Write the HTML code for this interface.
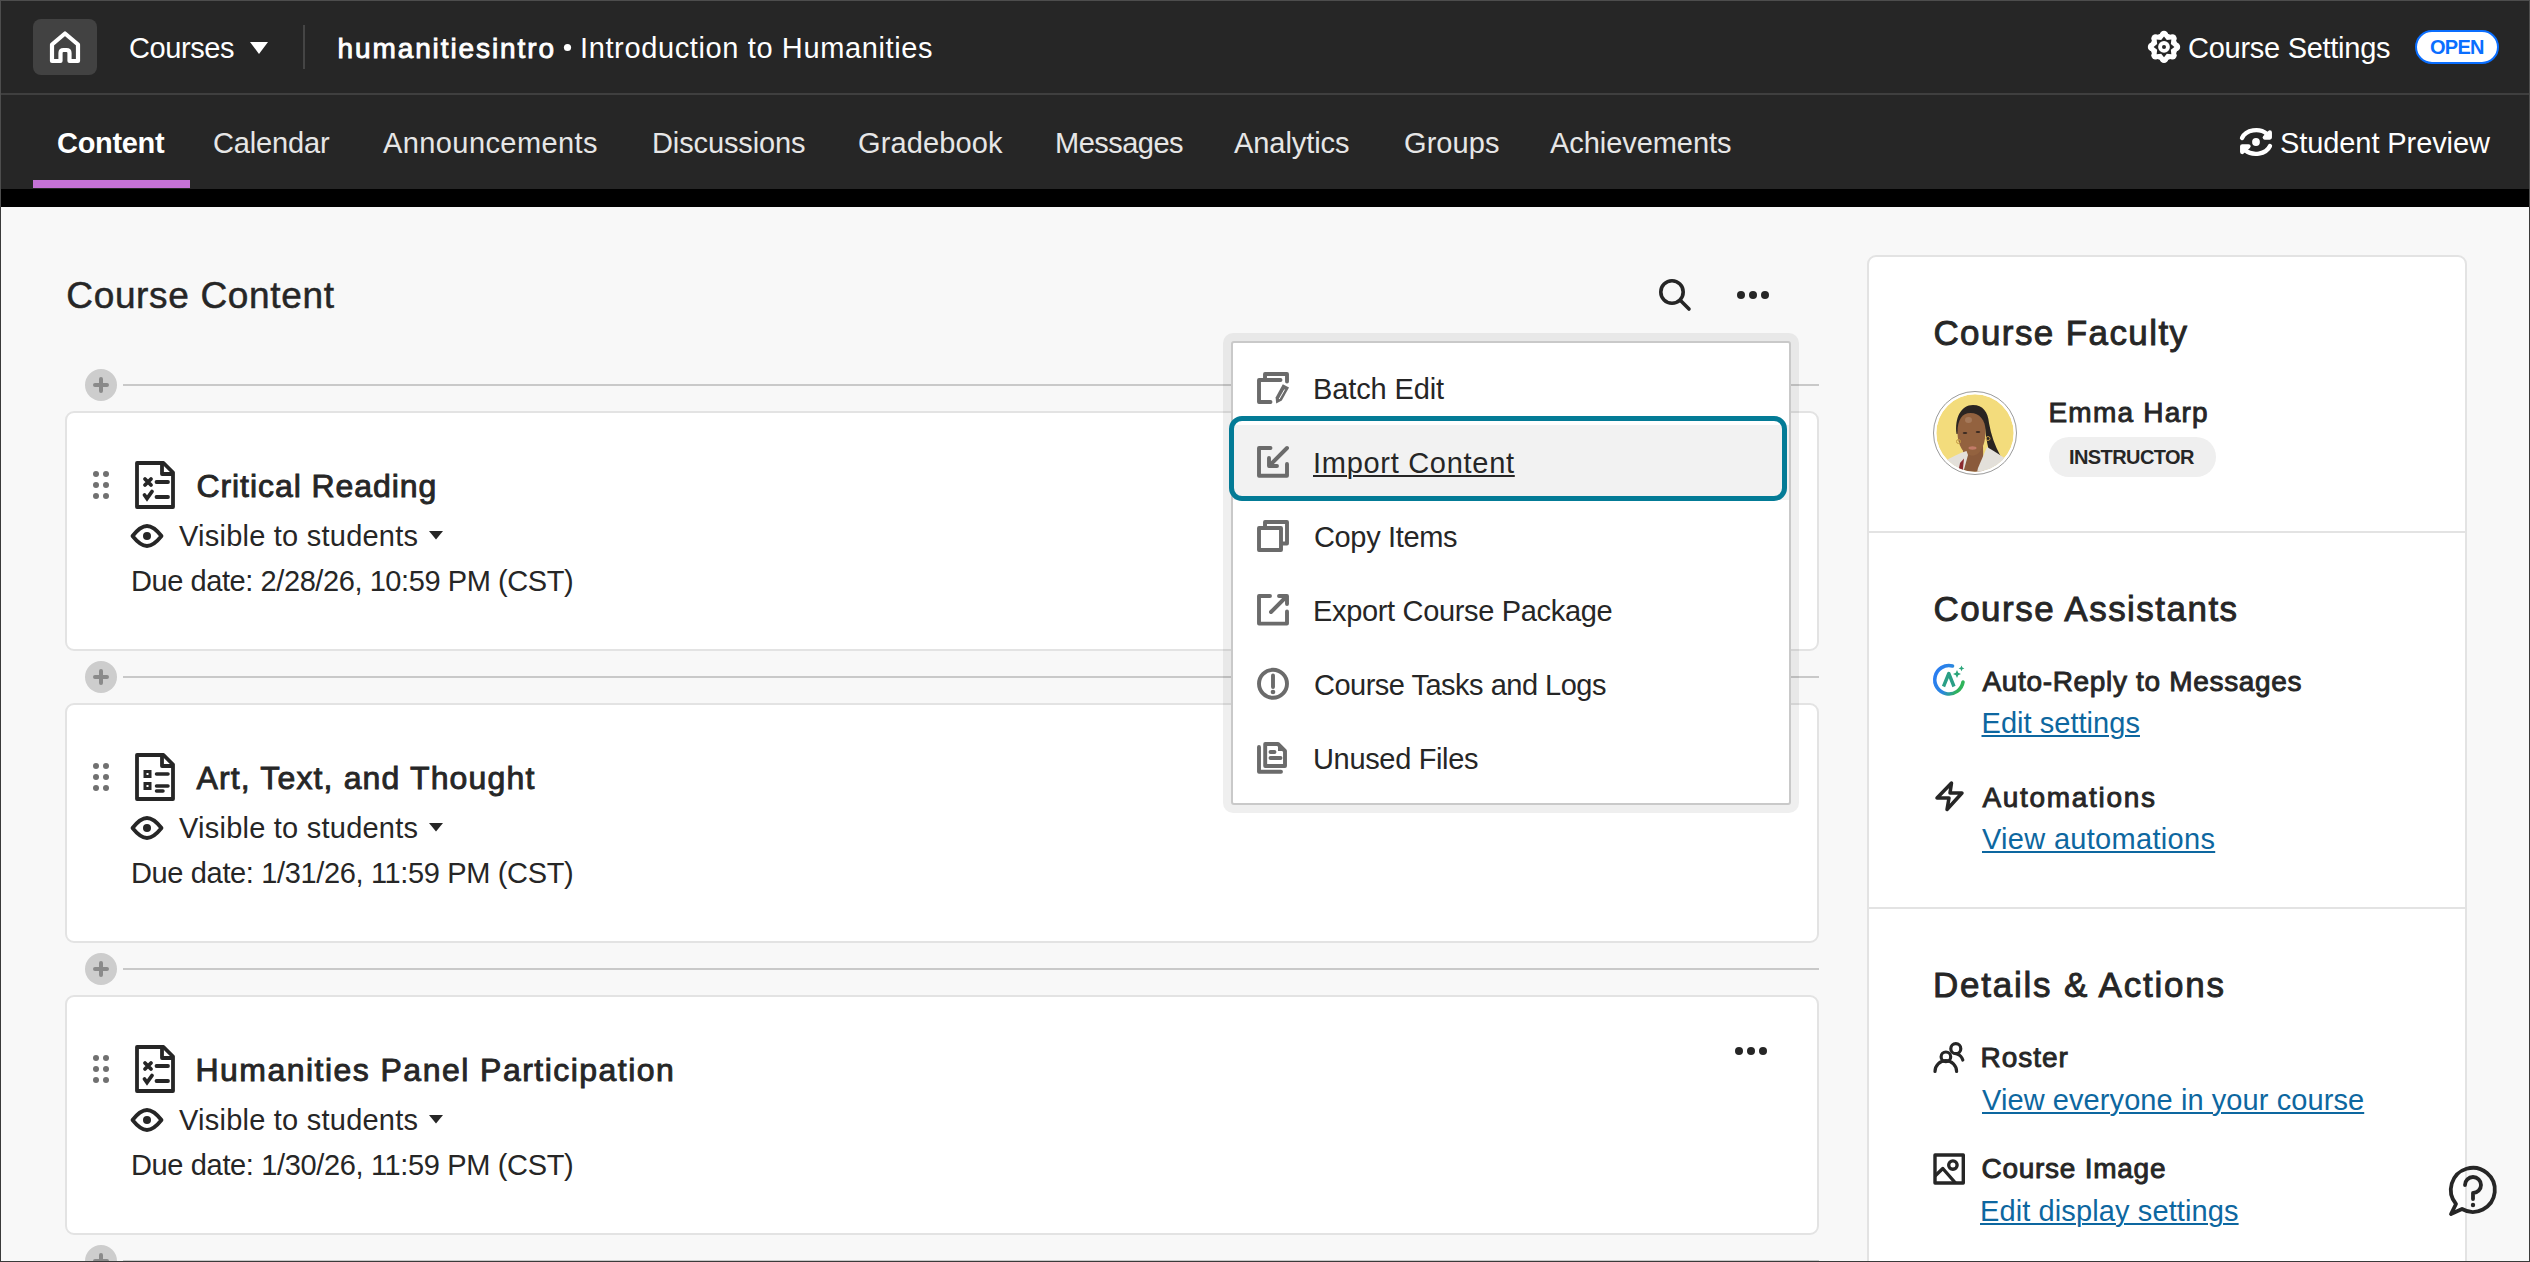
<!DOCTYPE html>
<html><head><meta charset="utf-8"><title>Course Content</title>
<style>
html,body{margin:0;padding:0}
body{width:2530px;height:1262px;position:relative;overflow:hidden;background:#f8f8f8;font-family:"Liberation Sans",sans-serif}
.a{position:absolute}
.t{position:absolute;white-space:nowrap;font-family:"Liberation Sans",sans-serif}
svg.full{position:absolute;left:0;top:0;width:2530px;height:1262px;overflow:visible}
</style></head><body>
<!-- top bars -->
<div class="a" style="left:0;top:0;width:2530px;height:189px;background:#262626"></div>
<div class="a" style="left:0;top:93px;width:2530px;height:2px;background:#3f3f3f"></div>
<div class="a" style="left:33px;top:19px;width:64px;height:56px;border-radius:8px;background:#424242"></div>
<div class="a" style="left:303px;top:25px;width:2px;height:44px;background:#454545"></div>
<div class="a" style="left:2415px;top:30px;width:80px;height:30px;border:2px solid #0a6eff;border-radius:17px;background:#fff"></div>
<div class="a" style="left:33px;top:180px;width:157px;height:8px;background:#c572d6"></div>
<div class="a" style="left:0;top:189px;width:2530px;height:18px;background:#000"></div>

<!-- add rows -->
<div class="a" style="left:123px;top:384px;width:1696px;height:2px;background:#c9c9c9"></div>
<div class="a" style="left:123px;top:676px;width:1696px;height:2px;background:#c9c9c9"></div>
<div class="a" style="left:123px;top:968px;width:1696px;height:2px;background:#c9c9c9"></div>
<div class="a" style="left:123px;top:1260px;width:1696px;height:2px;background:#c9c9c9"></div>

<!-- cards -->
<div class="a" style="left:65px;top:411px;width:1750px;height:236px;border:2px solid #e3e3e3;border-radius:9px;background:#fff"></div>
<div class="a" style="left:65px;top:703px;width:1750px;height:236px;border:2px solid #e3e3e3;border-radius:9px;background:#fff"></div>
<div class="a" style="left:65px;top:995px;width:1750px;height:236px;border:2px solid #e3e3e3;border-radius:9px;background:#fff"></div>

<!-- sidebar -->
<div class="a" style="left:1867px;top:255px;width:596px;height:1100px;border:2px solid #e3e3e3;border-radius:9px;background:#fff"></div>
<div class="a" style="left:1869px;top:531px;width:596px;height:2px;background:#e3e3e3"></div>
<div class="a" style="left:1869px;top:907px;width:596px;height:2px;background:#e3e3e3"></div>
<div class="a" style="left:2049px;top:437px;width:167px;height:40px;border-radius:20px;background:#efefef"></div>

<svg class="full" viewBox="0 0 2530 1262">
 <!-- house -->
 <path d="M60.5,61 H52 V44.5 L65,33.5 L78,44.5 V61 H69.5 V53 Q69.5,50 66.5,50 H63.5 Q60.5,50 60.5,53 Z" fill="none" stroke="#fff" stroke-width="4.2" stroke-linejoin="round"/>
 <!-- courses caret -->
 <polygon points="250,42 268,42 259,54" fill="#fff"/>
 <!-- bullet -->
 <circle cx="567.5" cy="47.5" r="3.6" fill="#fff"/>
 <!-- gear -->
 <g transform="translate(2164,46.9)" fill="#fff">
  <circle r="13.6"/>
  <circle cx="0.00" cy="-11.90" r="4.3"/><circle cx="8.41" cy="-8.41" r="4.3"/><circle cx="11.90" cy="-0.00" r="4.3"/><circle cx="8.41" cy="8.41" r="4.3"/><circle cx="0.00" cy="11.90" r="4.3"/><circle cx="-8.41" cy="8.41" r="4.3"/><circle cx="-11.90" cy="0.00" r="4.3"/><circle cx="-8.41" cy="-8.41" r="4.3"/>
  <polygon fill="#262626" points="0.00,-10.40 2.83,-6.84 7.35,-7.35 6.84,-2.83 10.40,-0.00 6.84,2.83 7.35,7.35 2.83,6.84 0.00,10.40 -2.83,6.84 -7.35,7.35 -6.84,2.83 -10.40,0.00 -6.84,-2.83 -7.35,-7.35 -2.83,-6.84"/>
  <circle r="5.9"/>
  <circle r="2" fill="#262626"/>
 </g>
 <!-- student preview -->
 <g fill="none" stroke="#fff" stroke-width="4.3" stroke-linecap="round" stroke-linejoin="round">
  <path d="M2242,138 A15,12 0 0 1 2267,134"/>
  <path d="M2264.8,137.5 H2269.8 V132.5 Z" fill="#fff"/>
  <path d="M2270,146 A15,12 0 0 1 2245,150"/>
  <path d="M2248.5,146.3 H2242.2 V152 Z" fill="#fff"/>
 </g>
 <circle cx="2256" cy="142" r="3.9" fill="#fff"/>

 <!-- search / more -->
 <circle cx="1672" cy="292" r="11.2" fill="none" stroke="#262626" stroke-width="3.6"/>
 <path d="M1681,301 L1689,309" stroke="#262626" stroke-width="3.6" stroke-linecap="round"/>
 <circle cx="1741" cy="295" r="4" fill="#262626"/><circle cx="1753" cy="295" r="4" fill="#262626"/><circle cx="1765" cy="295" r="4" fill="#262626"/>

 <!-- plus circles -->
 <g>
  <circle cx="101" cy="385" r="16" fill="#cdcdcd"/><path d="M95,385 H107 M101,379 V391" stroke="#8a8a8a" stroke-width="4" stroke-linecap="round"/>
  <circle cx="101" cy="677" r="16" fill="#cdcdcd"/><path d="M95,677 H107 M101,671 V683" stroke="#8a8a8a" stroke-width="4" stroke-linecap="round"/>
  <circle cx="101" cy="969" r="16" fill="#cdcdcd"/><path d="M95,969 H107 M101,963 V975" stroke="#8a8a8a" stroke-width="4" stroke-linecap="round"/>
  <circle cx="101" cy="1261" r="16" fill="#cdcdcd"/><path d="M95,1261 H107 M101,1255 V1267" stroke="#8a8a8a" stroke-width="4" stroke-linecap="round"/>
 </g>

 <!-- card icons -->
 <defs>
  <g id="drag" fill="#707070">
   <circle cx="96" cy="474" r="3"/><circle cx="106" cy="474" r="3"/>
   <circle cx="96" cy="485" r="3"/><circle cx="106" cy="485" r="3"/>
   <circle cx="96" cy="496" r="3"/><circle cx="106" cy="496" r="3"/>
  </g>
  <g id="docframe" fill="none" stroke="#262626" stroke-width="3.8" stroke-linejoin="round">
   <path d="M137,463 H163.5 L173,472.5 V507 H137 Z"/>
   <path d="M162,463 V474 H173"/>
  </g>
  <g id="eye">
   <path d="M132.5,536 C138.5,528.5 142.5,526 147,526 C151.5,526 155.5,528.5 161.5,536 C155.5,543.5 151.5,546 147,546 C142.5,546 138.5,543.5 132.5,536 Z" fill="none" stroke="#262626" stroke-width="3.8" stroke-linejoin="round"/>
   <circle cx="147" cy="536" r="4" fill="#262626"/>
   <polygon points="429,531 443,531 436,539.5" fill="#262626"/>
  </g>
 </defs>
 <use href="#drag"/><use href="#docframe"/><use href="#eye"/>
 <g stroke="#262626" stroke-width="3.8" stroke-linecap="round" fill="none">
  <path d="M145,479 L151,485 M151,479 L145,485"/>
  <path d="M156.5,482 H168"/>
  <path d="M144.5,495 L147,498.5 L152,491.5"/>
  <path d="M156.5,497 H168"/>
 </g>
 <!-- card 2 -->
 <g transform="translate(0,292)">
  <use href="#drag"/><use href="#docframe"/><use href="#eye"/>
  <g fill="none" stroke="#262626" stroke-width="3" >
   <rect x="145" y="479.5" width="5" height="5"/>
   <rect x="145" y="491.5" width="5" height="5"/>
  </g>
  <g stroke="#262626" stroke-width="3.5" stroke-linecap="round">
   <path d="M156.5,482 H168 M156.5,494 H168 M156.5,499 H163"/>
  </g>
 </g>
 <!-- card 3 -->
 <g transform="translate(0,584)">
  <use href="#drag"/><use href="#docframe"/><use href="#eye"/>
  <g stroke="#262626" stroke-width="3.8" stroke-linecap="round" fill="none">
   <path d="M145,479 L151,485 M151,479 L145,485"/>
   <path d="M156.5,482 H168"/>
   <path d="M144.5,495 L147,498.5 L152,491.5"/>
   <path d="M156.5,497 H168"/>
  </g>
 </g>
 <circle cx="1739" cy="1051" r="4" fill="#262626"/><circle cx="1751" cy="1051" r="4" fill="#262626"/><circle cx="1763" cy="1051" r="4" fill="#262626"/>

 <!-- sidebar icons -->
 <defs>
  <linearGradient id="aig" x1="0" y1="0" x2="1" y2="0.4">
   <stop offset="0" stop-color="#2a7cf6"/><stop offset="0.55" stop-color="#2a86e0"/><stop offset="1" stop-color="#2fb45a"/>
  </linearGradient>
 </defs>
 <path d="M1952.5,666 A14.2,14.2 0 1 0 1963,682" fill="none" stroke="url(#aig)" stroke-width="3.6" stroke-linecap="round"/>
 <path d="M1943.5,686.5 L1948.8,673.5 L1954,686.5" fill="none" stroke="#2a9f86" stroke-width="3.4" stroke-linejoin="round"/>
 <path d="M1957,670 l1.2,2.8 2.8,1.2 -2.8,1.2 -1.2,2.8 -1.2,-2.8 -2.8,-1.2 2.8,-1.2 z" fill="#2aa57a"/>
 <path d="M1961.5,665.5 l0.9,2 2,0.9 -2,0.9 -0.9,2 -0.9,-2 -2,-0.9 2,-0.9 z" fill="#2aa57a"/>
 <path d="M1951.5,783 L1937,798 H1949 L1947,809.5 L1962,793 H1950 Z" fill="none" stroke="#262626" stroke-width="3.5" stroke-linejoin="round"/>
 <!-- roster -->
 <g fill="none" stroke="#262626" stroke-width="3.2" stroke-linecap="round">
  <circle cx="1945.9" cy="1056.8" r="4.8"/>
  <circle cx="1955.8" cy="1048.7" r="5"/>
  <path d="M1935,1071.5 A10.8,10.8 0 0 1 1956.6,1071.5"/>
  <path d="M1957,1054 A9,9 0 0 1 1962.8,1060"/>
 </g>
 <!-- course image -->
 <g fill="none" stroke="#262626" stroke-width="3.4" stroke-linejoin="round">
  <rect x="1935" y="1155" width="28.3" height="28"/>
  <path d="M1935,1176 L1942.8,1168.5 L1955.5,1183"/>
  <circle cx="1952.9" cy="1165.1" r="4.2"/>
 </g>
 <!-- help -->
 <g fill="none" stroke="#262626" stroke-width="3.8" stroke-linecap="round" stroke-linejoin="round">
  <path d="M2456,1204 L2451,1214 L2462,1209 A22,22 0 1 0 2456,1204 Z"/>
  <path d="M2465,1185 A8,8 0 1 1 2473,1193 V1199"/>
 </g>
 <circle cx="2473" cy="1205" r="2.2" fill="#262626"/>

 <!-- avatar -->
 <circle cx="1975" cy="433" r="41.5" fill="#fff" stroke="#9a9a9a" stroke-width="1"/>
 <clipPath id="avc"><circle cx="1975" cy="433" r="38.7"/></clipPath>
 <g clip-path="url(#avc)">
  <circle cx="1975" cy="433" r="38.7" fill="#f3dc7c"/>
  <path d="M1956.5,434 C1954.5,418 1961,405 1973,405 C1983,405 1988,412 1989,423 C1991,435 1995,446 2000.5,456 L1991,459 C1988,448 1986,438 1985,428 Z" fill="#2a2421"/>
  <path d="M1963.5,447 L1983,445 L1983.5,477 L1961,477 Z" fill="#8a5a3b"/>
  <path d="M1957.5,432 C1957.5,420 1962,413 1970.5,413 C1979.5,413 1985.5,420 1985.5,431 C1985.5,445 1980,455.5 1972.5,455.5 C1964,455.5 1957.5,446 1957.5,432 Z" fill="#93623f"/>
  <ellipse cx="1968.5" cy="420" rx="3.5" ry="3" fill="#c9a58c" opacity="0.35"/>
  <ellipse cx="1965" cy="433" rx="2.3" ry="1" fill="#3a2a22"/>
  <ellipse cx="1978" cy="432" rx="2.3" ry="1" fill="#3a2a22"/>
  <ellipse cx="1972.5" cy="448" rx="4" ry="1.7" fill="#c27b68"/>
  <circle cx="1958.5" cy="441.5" r="2" fill="none" stroke="#c49a45" stroke-width="1"/>
  <circle cx="1988" cy="438.5" r="2" fill="none" stroke="#c49a45" stroke-width="1"/>
  <path d="M1943,477 L1945,461 C1952,457 1960,453 1966.5,451 L1968,455 L1962,477 Z" fill="#e3e0da"/>
  <path d="M1987,447 C1994,451 2000,455 2006,459 L2010,477 L1976,477 L1978,468 Z" fill="#e3e0da"/>
  <path d="M1960,463 L1964,458.5 L1962.5,473 L1958,473 Z" fill="#8b2a2f"/>
 </g>
</svg>

<!-- menu -->
<div class="a" style="left:1223px;top:333px;width:576px;height:480px;border-radius:10px;background:rgba(0,0,0,0.062)"></div>
<div class="a" style="left:1231px;top:341px;width:556px;height:460px;border:2px solid #c9c9c9;border-radius:3px;background:#fff"></div>
<div class="a" style="left:1233px;top:425px;width:556px;height:75px;background:#f2f2f2"></div>
<div class="a" style="left:1229px;top:416px;width:548px;height:75px;border:5px solid #037b96;border-radius:13px"></div>
<svg class="full" viewBox="0 0 2530 1262">
 <g fill="none" stroke="#6b6b6b" stroke-width="3.9" stroke-linecap="round" stroke-linejoin="round">
  <!-- batch edit -->
  <path d="M1265,378 V374 H1287 V381.5"/>
  <path d="M1280.5,380 H1259 V402 H1270.5"/>
  <!-- import -->
  <path d="M1270.5,448 H1259 V475.7 H1287 V464"/>
  <path d="M1287,448 L1271,464"/>
  <path d="M1269,458 V466 H1277"/>
  <!-- copy -->
  <path d="M1265,526 V522 H1287 V543.5 H1283"/>
  <rect x="1259" y="528" width="22" height="22"/>
  <!-- export -->
  <path d="M1270,596 H1259 V623.6 H1287 V611.5"/>
  <path d="M1271,612 L1285,598"/>
  <path d="M1279,596 H1287 V604"/>
  <!-- tasks -->
  <circle cx="1273" cy="683.8" r="14"/>
  <path d="M1273,675.5 V687"/>
  <!-- unused -->
  <path d="M1259,747 V771.7 H1281"/>
  <path d="M1265.2,744 H1278 L1285,751 V766 H1265.2 Z"/>
  <path d="M1270.5,752 H1274.5 M1270.5,758 H1280.5"/>
 </g>
 <circle cx="1273" cy="692" r="2.3" fill="#6b6b6b"/>
 <path d="M1278,744 L1285,751 H1278 Z" fill="#6b6b6b"/>
 <!-- pencil -->
 <path d="M1282.8,384.2 L1289,387.6 L1281.8,400.6 L1276.2,403.4 L1275.6,397.4 Z" fill="#6b6b6b"/>
 <path d="M1284.6,389.5 L1279.2,399" stroke="#fff" stroke-width="1"/>
</svg>

<div class="t" style="left:129.00px;top:34.45px;font-size:29px;line-height:29px;font-weight:400;color:#ffffff;letter-spacing:-0.414px;">Courses</div>
<div class="t" style="left:337.45px;top:35.30px;font-size:28px;line-height:28px;font-weight:400;color:#ffffff;letter-spacing:1.914px;-webkit-text-stroke:0.9px #ffffff;">humanitiesintro</div>
<div class="t" style="left:580.00px;top:34.45px;font-size:29px;line-height:29px;font-weight:400;color:#ffffff;letter-spacing:0.624px;">Introduction to Humanities</div>
<div class="t" style="left:2188.00px;top:33.95px;font-size:29px;line-height:29px;font-weight:400;color:#ffffff;letter-spacing:-0.273px;">Course Settings</div>
<div class="t" style="left:2430.00px;top:37.07px;font-size:20px;line-height:20px;font-weight:700;color:#0a6eff;letter-spacing:-0.745px;">OPEN</div>
<div class="t" style="left:57.00px;top:129.45px;font-size:29px;line-height:29px;font-weight:700;color:#ffffff;letter-spacing:-0.312px;">Content</div>
<div class="t" style="left:213.00px;top:129.45px;font-size:29px;line-height:29px;font-weight:400;color:#e6e6e6;letter-spacing:-0.147px;">Calendar</div>
<div class="t" style="left:383.00px;top:129.45px;font-size:29px;line-height:29px;font-weight:400;color:#e6e6e6;letter-spacing:0.410px;">Announcements</div>
<div class="t" style="left:652.00px;top:129.45px;font-size:29px;line-height:29px;font-weight:400;color:#e6e6e6;letter-spacing:-0.121px;">Discussions</div>
<div class="t" style="left:858.00px;top:129.45px;font-size:29px;line-height:29px;font-weight:400;color:#e6e6e6;letter-spacing:0.127px;">Gradebook</div>
<div class="t" style="left:1055.00px;top:129.45px;font-size:29px;line-height:29px;font-weight:400;color:#e6e6e6;letter-spacing:-0.524px;">Messages</div>
<div class="t" style="left:1234.00px;top:129.45px;font-size:29px;line-height:29px;font-weight:400;color:#e6e6e6;letter-spacing:-0.068px;">Analytics</div>
<div class="t" style="left:1404.00px;top:129.45px;font-size:29px;line-height:29px;font-weight:400;color:#e6e6e6;letter-spacing:0.080px;">Groups</div>
<div class="t" style="left:1550.00px;top:129.45px;font-size:29px;line-height:29px;font-weight:400;color:#e6e6e6;letter-spacing:-0.058px;">Achievements</div>
<div class="t" style="left:2280.00px;top:129.45px;font-size:29px;line-height:29px;font-weight:400;color:#ffffff;letter-spacing:-0.088px;">Student Preview</div>
<div class="t" style="left:66.25px;top:276.68px;font-size:37px;line-height:37px;font-weight:400;color:#262626;letter-spacing:0.664px;-webkit-text-stroke:0.5px #262626;">Course Content</div>
<div class="t" style="left:196.45px;top:469.91px;font-size:32px;line-height:32px;font-weight:400;color:#262626;letter-spacing:0.935px;-webkit-text-stroke:0.9px #262626;">Critical Reading</div>
<div class="t" style="left:179.00px;top:522.45px;font-size:29px;line-height:29px;font-weight:400;color:#262626;letter-spacing:0.232px;">Visible to students</div>
<div class="t" style="left:131.00px;top:567.45px;font-size:29px;line-height:29px;font-weight:400;color:#262626;letter-spacing:-0.423px;">Due date: 2/28/26, 10:59 PM (CST)</div>
<div class="t" style="left:196.45px;top:761.91px;font-size:32px;line-height:32px;font-weight:400;color:#262626;letter-spacing:1.150px;-webkit-text-stroke:0.9px #262626;">Art, Text, and Thought</div>
<div class="t" style="left:179.00px;top:814.45px;font-size:29px;line-height:29px;font-weight:400;color:#262626;letter-spacing:0.232px;">Visible to students</div>
<div class="t" style="left:131.00px;top:859.45px;font-size:29px;line-height:29px;font-weight:400;color:#262626;letter-spacing:-0.355px;">Due date: 1/31/26, 11:59 PM (CST)</div>
<div class="t" style="left:195.45px;top:1053.91px;font-size:32px;line-height:32px;font-weight:400;color:#262626;letter-spacing:1.470px;-webkit-text-stroke:0.9px #262626;">Humanities Panel Participation</div>
<div class="t" style="left:179.00px;top:1105.95px;font-size:29px;line-height:29px;font-weight:400;color:#262626;letter-spacing:0.232px;">Visible to students</div>
<div class="t" style="left:131.00px;top:1151.45px;font-size:29px;line-height:29px;font-weight:400;color:#262626;letter-spacing:-0.355px;">Due date: 1/30/26, 11:59 PM (CST)</div>
<div class="t" style="left:1313.00px;top:375.45px;font-size:29px;line-height:29px;font-weight:400;color:#262626;letter-spacing:-0.125px;">Batch Edit</div>
<div class="t" style="left:1313.00px;top:449.45px;font-size:29px;line-height:29px;font-weight:400;color:#262626;letter-spacing:0.711px;text-decoration:underline;text-decoration-thickness:2px;text-underline-offset:2px;">Import Content</div>
<div class="t" style="left:1314.00px;top:523.45px;font-size:29px;line-height:29px;font-weight:400;color:#262626;letter-spacing:-0.351px;">Copy Items</div>
<div class="t" style="left:1313.00px;top:597.45px;font-size:29px;line-height:29px;font-weight:400;color:#262626;letter-spacing:-0.332px;">Export Course Package</div>
<div class="t" style="left:1314.00px;top:671.45px;font-size:29px;line-height:29px;font-weight:400;color:#262626;letter-spacing:-0.503px;">Course Tasks and Logs</div>
<div class="t" style="left:1313.00px;top:745.45px;font-size:29px;line-height:29px;font-weight:400;color:#262626;letter-spacing:-0.340px;">Unused Files</div>
<div class="t" style="left:1933.45px;top:315.37px;font-size:35px;line-height:35px;font-weight:400;color:#262626;letter-spacing:1.403px;-webkit-text-stroke:0.9px #262626;">Course Faculty</div>
<div class="t" style="left:2048.45px;top:399.30px;font-size:28px;line-height:28px;font-weight:400;color:#262626;letter-spacing:1.226px;-webkit-text-stroke:0.9px #262626;">Emma Harp</div>
<div class="t" style="left:2069.00px;top:447.07px;font-size:20px;line-height:20px;font-weight:700;color:#262626;letter-spacing:-0.589px;">INSTRUCTOR</div>
<div class="t" style="left:1933.45px;top:591.37px;font-size:35px;line-height:35px;font-weight:400;color:#262626;letter-spacing:1.472px;-webkit-text-stroke:0.9px #262626;">Course Assistants</div>
<div class="t" style="left:1982.45px;top:668.30px;font-size:28px;line-height:28px;font-weight:400;color:#262626;letter-spacing:0.670px;-webkit-text-stroke:0.9px #262626;">Auto-Reply to Messages</div>
<div class="t" style="left:1981.50px;top:709.45px;font-size:29px;line-height:29px;font-weight:400;color:#0d67a0;letter-spacing:0.036px;text-decoration:underline;text-decoration-thickness:2px;text-underline-offset:2px;">Edit settings</div>
<div class="t" style="left:1982.45px;top:784.30px;font-size:28px;line-height:28px;font-weight:400;color:#262626;letter-spacing:1.696px;-webkit-text-stroke:0.9px #262626;">Automations</div>
<div class="t" style="left:1982.00px;top:825.45px;font-size:29px;line-height:29px;font-weight:400;color:#0d67a0;letter-spacing:0.302px;text-decoration:underline;text-decoration-thickness:2px;text-underline-offset:2px;">View automations</div>
<div class="t" style="left:1932.95px;top:967.37px;font-size:35px;line-height:35px;font-weight:400;color:#262626;letter-spacing:1.784px;-webkit-text-stroke:0.9px #262626;">Details &amp; Actions</div>
<div class="t" style="left:1980.45px;top:1044.30px;font-size:28px;line-height:28px;font-weight:400;color:#262626;letter-spacing:0.991px;-webkit-text-stroke:0.9px #262626;">Roster</div>
<div class="t" style="left:1982.00px;top:1086.45px;font-size:29px;line-height:29px;font-weight:400;color:#0d67a0;letter-spacing:0.083px;text-decoration:underline;text-decoration-thickness:2px;text-underline-offset:2px;">View everyone in your course</div>
<div class="t" style="left:1981.45px;top:1155.30px;font-size:28px;line-height:28px;font-weight:400;color:#262626;letter-spacing:0.746px;-webkit-text-stroke:0.9px #262626;">Course Image</div>
<div class="t" style="left:1980.00px;top:1197.45px;font-size:29px;line-height:29px;font-weight:400;color:#0d67a0;letter-spacing:0.110px;text-decoration:underline;text-decoration-thickness:2px;text-underline-offset:2px;">Edit display settings</div>

<!-- frame -->
<div class="a" style="left:0;top:0;width:2530px;height:1px;background:#4d4d4d"></div>
<div class="a" style="left:0;top:0;width:1px;height:207px;background:#4d4d4d"></div>
<div class="a" style="left:2529px;top:0;width:1px;height:207px;background:#4d4d4d"></div>
<div class="a" style="left:0;top:207px;width:1px;height:1055px;background:#3a3a3a"></div>
<div class="a" style="left:2529px;top:207px;width:1px;height:1055px;background:#3a3a3a"></div>
<div class="a" style="left:0;top:1261px;width:2530px;height:1px;background:#3a3a3a"></div>
</body></html>
